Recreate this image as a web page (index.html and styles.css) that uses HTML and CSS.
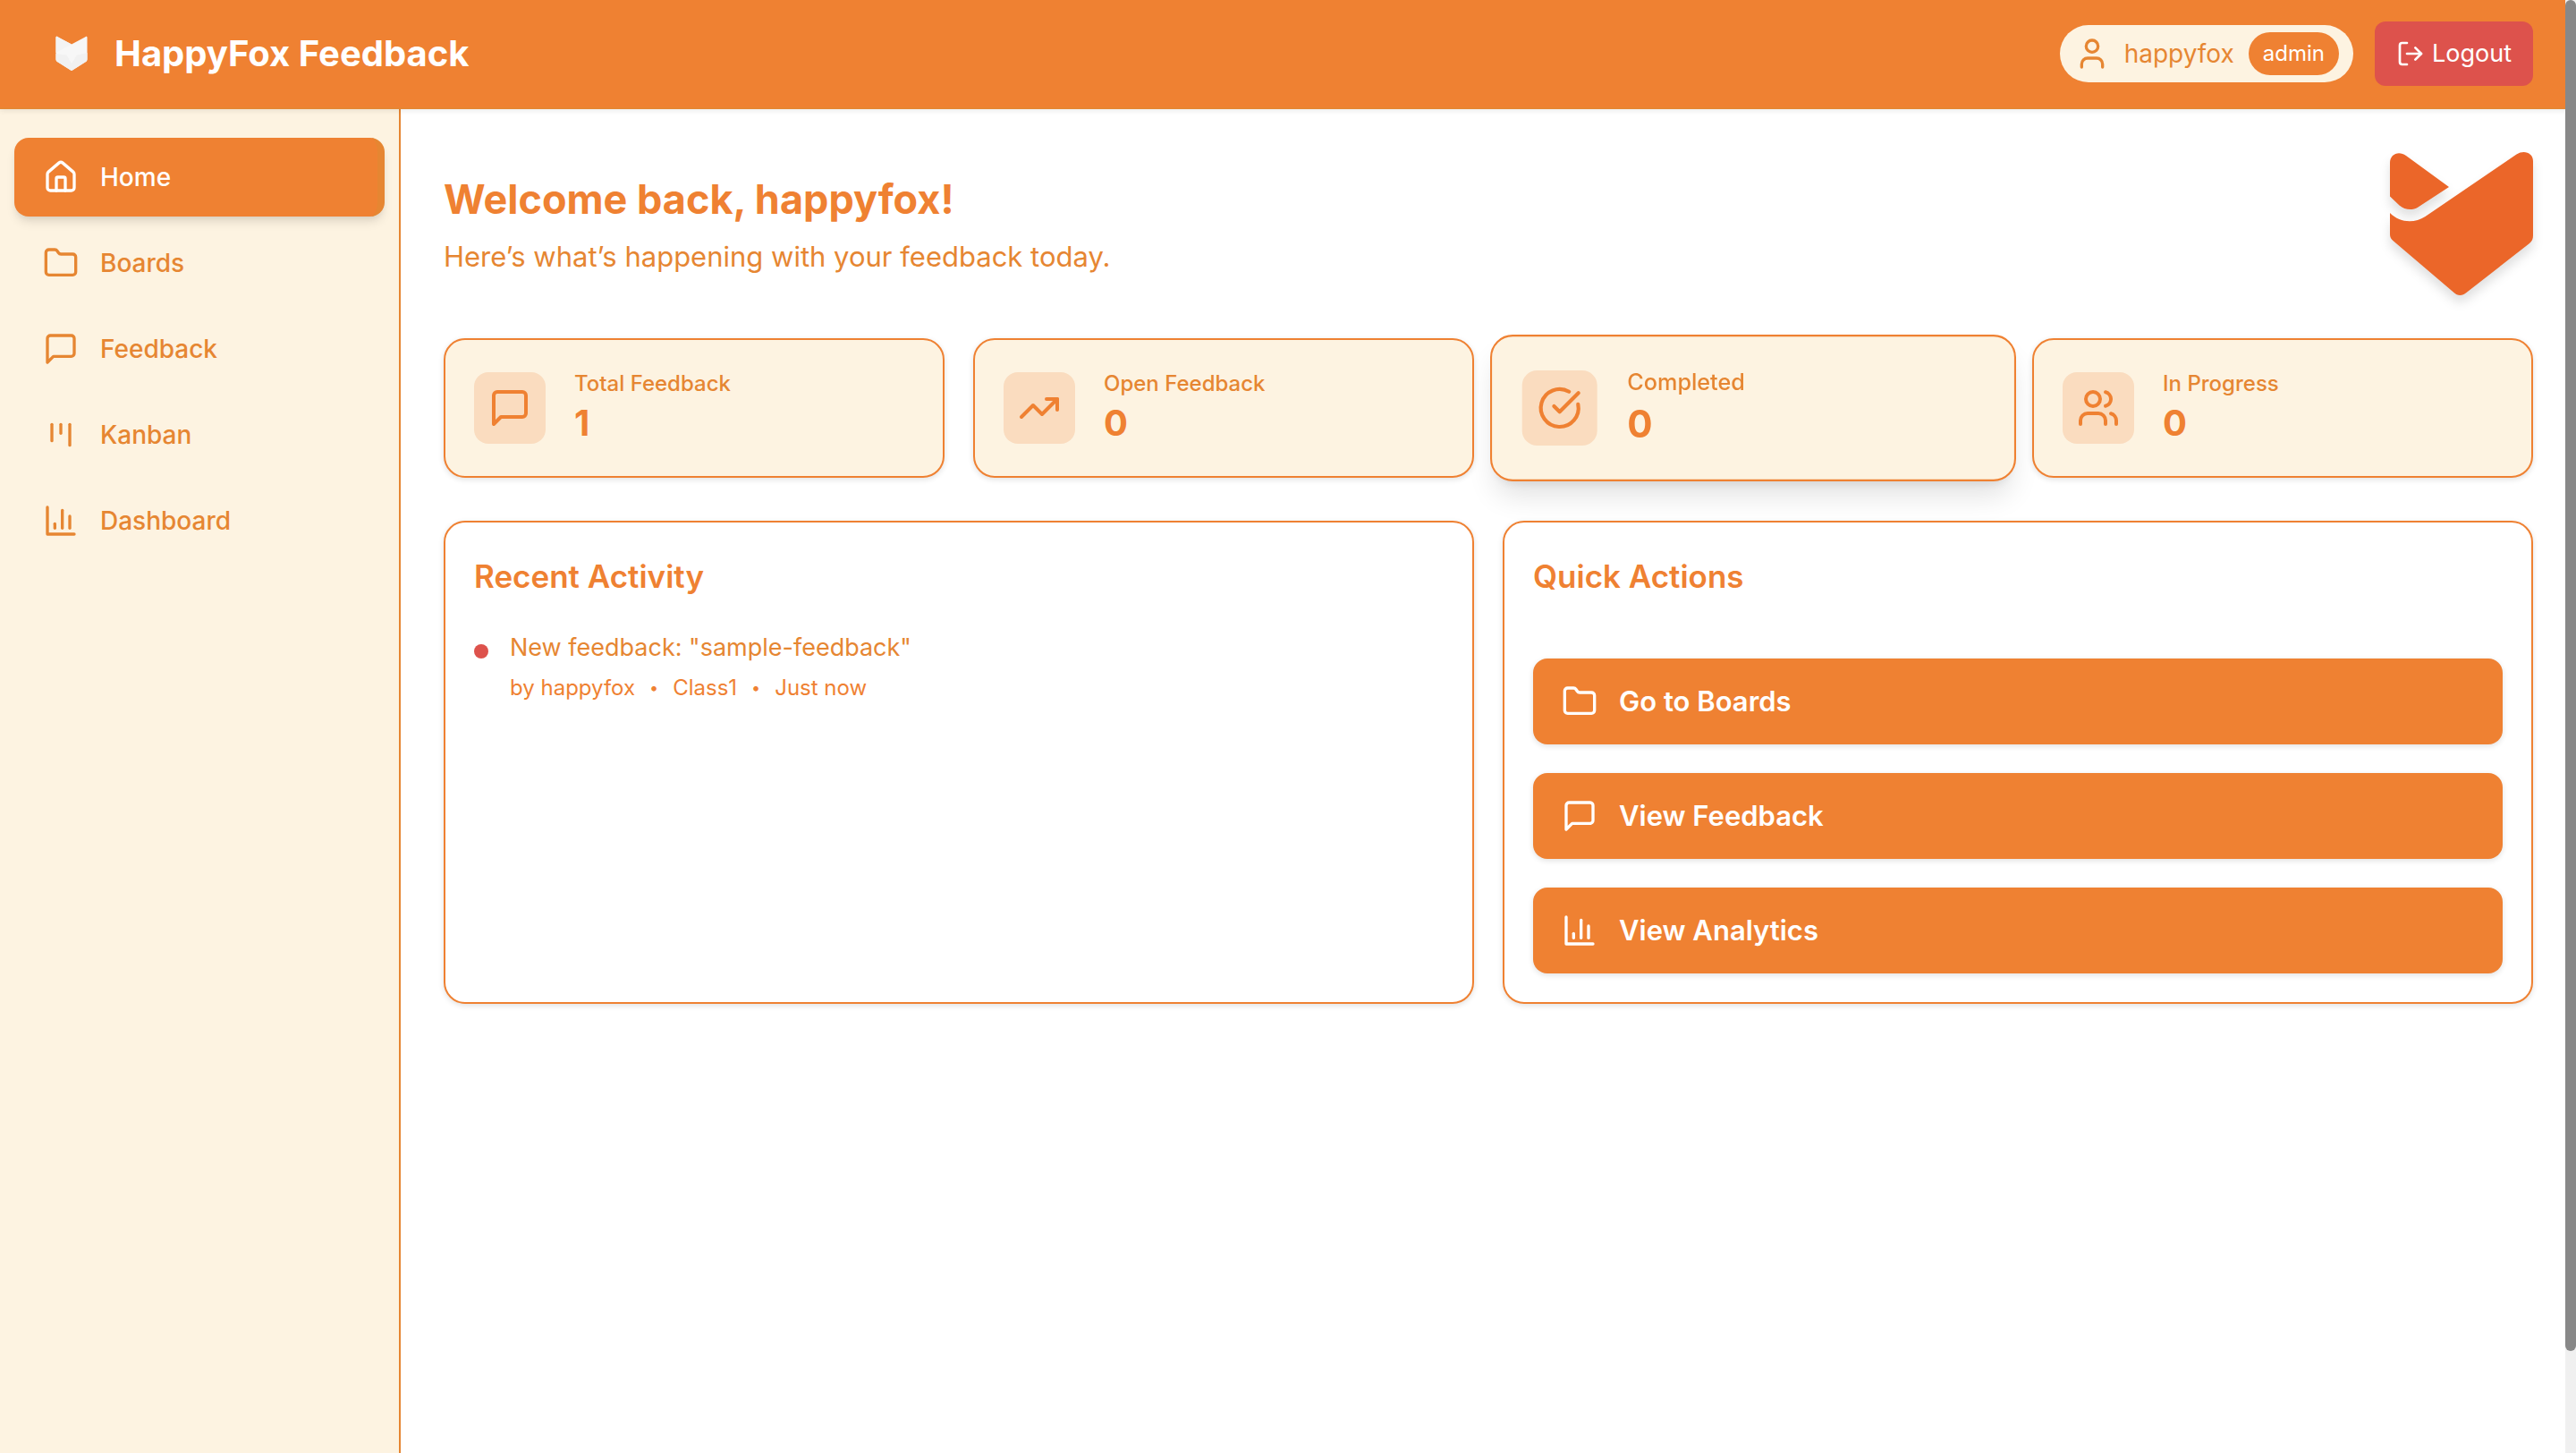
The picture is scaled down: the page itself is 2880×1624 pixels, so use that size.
FILE: index.html
```html
<!DOCTYPE html>
<html lang="en">
<head>
  <meta charset="utf-8">
  <meta name="viewport" content="width=device-width, initial-scale=1">
  <title>HappyFox Feedback</title>
  <link rel="stylesheet" href="styles.css">
</head>
<body>
  <svg class="sprite" aria-hidden="true">
    <symbol id="i-home" viewBox="0 0 24 24"><path d="M15 21v-8a1 1 0 0 0-1-1h-4a1 1 0 0 0-1 1v8"/><path d="M3 10a2 2 0 0 1 .709-1.528l7-5.999a2 2 0 0 1 2.582 0l7 5.999A2 2 0 0 1 21 10v9a2 2 0 0 1-2 2H5a2 2 0 0 1-2-2z"/></symbol>
    <symbol id="i-folder" viewBox="0 0 24 24"><path d="M20 20a2 2 0 0 0 2-2V8a2 2 0 0 0-2-2h-7.9a2 2 0 0 1-1.69-.9L9.6 3.9A2 2 0 0 0 7.93 3H4a2 2 0 0 0-2 2v13a2 2 0 0 0 2 2Z"/></symbol>
    <symbol id="i-message" viewBox="0 0 24 24"><path d="M21 15a2 2 0 0 1-2 2H7l-4 4V5a2 2 0 0 1 2-2h14a2 2 0 0 1 2 2z"/></symbol>
    <symbol id="i-kanban" viewBox="0 0 24 24"><path d="M6 5v11"/><path d="M12 5v6"/><path d="M18 5v14"/></symbol>
    <symbol id="i-chart" viewBox="0 0 24 24"><path d="M3 3v18h18"/><path d="M18 17V9"/><path d="M13 17V5"/><path d="M8 17v-3"/></symbol>
    <symbol id="i-trend" viewBox="0 0 24 24"><path d="m22 7-8.5 8.5-5-5L2 17"/><path d="M16 7h6v6"/></symbol>
    <symbol id="i-check" viewBox="0 0 24 24"><path d="M21.801 10A10 10 0 1 1 17 3.335"/><path d="m9 11 3 3L22 4"/></symbol>
    <symbol id="i-users" viewBox="0 0 24 24"><path d="M16 21v-2a4 4 0 0 0-4-4H6a4 4 0 0 0-4 4v2"/><circle cx="9" cy="7" r="4"/><path d="M22 21v-2a4 4 0 0 0-3-3.87"/><path d="M16 3.13a4 4 0 0 1 0 7.75"/></symbol>
    <symbol id="i-user" viewBox="0 0 24 24"><path d="M19 21v-2a4 4 0 0 0-4-4H9a4 4 0 0 0-4 4v2"/><circle cx="12" cy="7" r="4"/></symbol>
    <symbol id="i-logout" viewBox="0 0 24 24"><path d="M9 21H5a2 2 0 0 1-2-2V5a2 2 0 0 1 2-2h4"/><path d="m16 17 5-5-5-5"/><path d="M21 12H9"/></symbol>
  </svg>

  <header class="topbar">
    <div class="brand">
      <svg class="brand-mark" viewBox="0 0 64 64" aria-hidden="true">
        <path fill="#f7f7f7" d="M14.500 14C14.500 12.800 15.700 12.600 16.500 13.200L32 21.500L47.500 13.200C48.500 12.600 49.500 12.800 49.500 14V38C49.500 39.500 49 40.300 48 41L33 50.500C32.300 51 31.700 51 31 50.500L16 41C15 40.300 14.500 39.500 14.500 38Z"/>
        <path fill="#f1f1f1" d="M14.500 32L26.500 33.500L32 43L38 33.500L49.500 31V38C49.500 39.500 49 40.300 48 41L33 50.500C32.300 51 31.700 51 31 50.500L16 41C15 40.300 14.500 39.500 14.500 38Z"/>
        <path fill="#f3f3f3" d="M14.500 14C14.500 12.800 15.700 12.600 16.500 13.200L32 21.500L14.500 31Z"/>
      </svg>
      <span class="brand-name">HappyFox Feedback</span>
    </div>
    <div class="account">
      <div class="user-pill">
        <svg class="icon"><use href="#i-user"/></svg>
        <span class="user-name">happyfox</span>
        <span class="role">admin</span>
      </div>
      <button class="logout" type="button">
        <svg class="icon icon-sm"><use href="#i-logout"/></svg>
        Logout
      </button>
    </div>
  </header>

  <div class="layout">
    <nav class="sidebar" aria-label="Main">
      <a class="nav-item active" href="#home" aria-current="page"><svg class="icon"><use href="#i-home"/></svg>Home</a>
      <a class="nav-item" href="#boards"><svg class="icon"><use href="#i-folder"/></svg>Boards</a>
      <a class="nav-item" href="#feedback"><svg class="icon"><use href="#i-message"/></svg>Feedback</a>
      <a class="nav-item" href="#kanban"><svg class="icon"><use href="#i-kanban"/></svg>Kanban</a>
      <a class="nav-item" href="#dashboard"><svg class="icon"><use href="#i-chart"/></svg>Dashboard</a>
    </nav>

    <main class="content">
      <section class="welcome">
        <div class="welcome-text">
          <h1>Welcome back, happyfox!</h1>
          <p>Here’s what’s happening with your feedback today.</p>
        </div>
        <svg class="fox" viewBox="0 0 160 160" role="img" aria-label="HappyFox">
          <path d="M0 12C0 2 10 -2 18 4L66 39L31.500 61.500C25 65.500 17 65 10.500 59.500L0 49.500Z"/>
          <path d="M0 68C11 79 27 80 39.500 72L141.500 2.500C150 -3 160 1 160 10V93C160 97 159 99 156 102L85.500 157C81 161 75.500 161 71.500 157L4 99.500C1 97 0 95 0 92Z"/>
        </svg>
      </section>

      <section class="stats" aria-label="Statistics">
        <article class="stat">
          <span class="stat-icon"><svg class="icon icon-lg"><use href="#i-message"/></svg></span>
          <div><p class="stat-label">Total Feedback</p><p class="stat-value">1</p></div>
        </article>
        <article class="stat">
          <span class="stat-icon"><svg class="icon icon-lg"><use href="#i-trend"/></svg></span>
          <div><p class="stat-label">Open Feedback</p><p class="stat-value">0</p></div>
        </article>
        <article class="stat raised">
          <span class="stat-icon"><svg class="icon icon-lg"><use href="#i-check"/></svg></span>
          <div><p class="stat-label">Completed</p><p class="stat-value">0</p></div>
        </article>
        <article class="stat">
          <span class="stat-icon"><svg class="icon icon-lg"><use href="#i-users"/></svg></span>
          <div><p class="stat-label">In Progress</p><p class="stat-value">0</p></div>
        </article>
      </section>

      <div class="panels">
        <section class="panel">
          <h2>Recent Activity</h2>
          <ul class="activity">
            <li>
              <span class="dot"></span>
              <div>
                <p class="activity-title">New feedback: "sample-feedback"</p>
                <p class="activity-meta"><span>by happyfox</span><span class="sep">•</span><span>Class1</span><span class="sep">•</span><span>Just now</span></p>
              </div>
            </li>
          </ul>
        </section>
        <section class="panel">
          <h2>Quick Actions</h2>
          <div class="actions">
            <button class="action" type="button"><svg class="icon"><use href="#i-folder"/></svg>Go to Boards</button>
            <button class="action" type="button"><svg class="icon"><use href="#i-message"/></svg>View Feedback</button>
            <button class="action" type="button"><svg class="icon"><use href="#i-chart"/></svg>View Analytics</button>
          </div>
        </section>
      </div>
    </main>
  </div>

  <div class="scrollbar" aria-hidden="true"><div class="thumb"></div></div>
</body>
</html>
```
FILE: styles.css
```css
:root {
  --orange: #ef8132;
  --amber: #e68632;
  --cream: #fdf3e1;
  --red: #dd524c;
}

* {
  box-sizing: border-box;
}

body {
  margin: 0;
  min-height: 100vh;
  display: flex;
  flex-direction: column;
  background: #fff;
  color: var(--orange);
  font-family: Inter, "Liberation Sans", sans-serif;
}

h1, h2, p, ul {
  margin: 0;
  padding: 0;
}

button {
  border: 0;
  font: inherit;
  color: #fff;
  cursor: pointer;
}

.sprite {
  display: none;
}

.icon {
  flex: none;
  width: 40px;
  height: 40px;
  fill: none;
  stroke: currentColor;
  stroke-width: 2;
  stroke-linecap: round;
  stroke-linejoin: round;
}

.icon-sm {
  width: 32px;
  height: 32px;
}

.icon-lg {
  width: 48px;
  height: 48px;
}

/* Top bar */
.topbar {
  position: relative;
  z-index: 1;
  display: flex;
  align-items: center;
  justify-content: space-between;
  padding: 24px 48px;
  background: var(--orange);
  border-bottom: 2px solid var(--amber);
  box-shadow: 0 2px 6px rgba(0, 0, 0, 0.08);
}

.brand,
.account {
  display: flex;
  align-items: center;
}

.brand {
  gap: 16px;
}

.brand-mark {
  width: 64px;
  height: 64px;
}

.brand-name {
  color: #fff;
  font-size: 40px;
  font-weight: 700;
  line-height: 56px;
}

.account {
  gap: 24px;
}

.user-pill {
  display: flex;
  align-items: center;
  gap: 16px;
  padding: 8px 16px;
  border-radius: 32px;
  background: var(--cream);
  color: var(--amber);
}

.user-name {
  font-size: 28px;
  line-height: 40px;
}

.role {
  padding: 8px 16px;
  border-radius: 24px;
  background: var(--orange);
  color: #fff;
  font-size: 24px;
  line-height: 32px;
}

.logout {
  display: flex;
  align-items: center;
  gap: 8px;
  padding: 16px 24px;
  border-radius: 12px;
  background: var(--red);
  font-size: 27px;
  line-height: 40px;
}

/* Page body */
.layout {
  flex: 1;
  display: flex;
}

.sidebar {
  flex: none;
  width: 448px;
  display: flex;
  flex-direction: column;
  gap: 8px;
  padding: 32px 16px;
  background: var(--cream);
  border-right: 2px solid var(--amber);
}

.nav-item {
  display: flex;
  align-items: center;
  gap: 24px;
  padding: 24px 32px;
  border-radius: 16px;
  color: var(--amber);
  font-size: 28px;
  font-weight: 450;
  line-height: 40px;
  text-decoration: none;
}

.nav-item.active {
  background: var(--orange);
  border-right: 8px solid var(--amber);
  color: #fff;
  box-shadow: 0 8px 12px -2px rgba(0, 0, 0, 0.1), 0 4px 8px -4px rgba(0, 0, 0, 0.1);
}

.content {
  flex: 1;
  min-width: 0;
  display: flex;
  flex-direction: column;
  gap: 48px;
  padding: 48px;
}

.welcome {
  display: flex;
  align-items: center;
  justify-content: space-between;
}

.welcome-text {
  display: flex;
  flex-direction: column;
  gap: 10px;
}

h1 {
  font-size: 45px;
  font-weight: 700;
  line-height: 64px;
}

.welcome-text p {
  color: var(--amber);
  font-size: 31px;
  line-height: 44px;
}

.fox {
  width: 160px;
  height: 160px;
  fill: #eb6629;
  overflow: visible;
  filter: drop-shadow(0 8px 6px rgba(0, 0, 0, 0.12));
}

/* Stat cards */
.stats {
  display: grid;
  grid-template-columns: repeat(4, 1fr);
  gap: 32px;
}

.stat {
  display: flex;
  align-items: center;
  gap: 32px;
  padding: 32px;
  border: 2px solid var(--orange);
  border-radius: 24px;
  background: var(--cream);
  box-shadow: 0 2px 6px rgba(0, 0, 0, 0.12);
}

.stat.raised {
  transform: scale(1.05);
  box-shadow: 0 20px 30px -6px rgba(0, 0, 0, 0.12), 0 8px 12px -8px rgba(0, 0, 0, 0.12);
}

.stat-icon {
  display: grid;
  place-items: center;
  width: 80px;
  height: 80px;
  border-radius: 16px;
  background: #fadcbf;
}

.stat-label {
  color: var(--amber);
  font-size: 24px;
  font-weight: 450;
  line-height: 34px;
}

.stat-value {
  font-size: 40px;
  font-weight: 650;
  line-height: 54px;
}

/* Panels */
.panels {
  display: grid;
  grid-template-columns: 1fr 1fr;
  gap: 32px;
}

.panel {
  padding: 32px;
  border: 2px solid var(--orange);
  border-radius: 24px;
  background: #fff;
  box-shadow: 0 2px 6px rgba(0, 0, 0, 0.12);
}

h2 {
  font-size: 35px;
  font-weight: 600;
  line-height: 56px;
}

.activity {
  margin-top: 32px;
  list-style: none;
}

.activity li {
  display: flex;
  gap: 24px;
}

.dot {
  flex: none;
  width: 16px;
  height: 16px;
  margin-top: 16px;
  border-radius: 50%;
  background: var(--red);
}

.activity-title {
  color: var(--amber);
  font-size: 27px;
  line-height: 40px;
}

.activity-meta {
  display: flex;
  gap: 16px;
  margin-top: 8px;
  font-size: 24px;
  line-height: 34px;
}

.sep {
  font-size: 18px;
}

.actions {
  display: flex;
  flex-direction: column;
  gap: 32px;
  margin-top: 64px;
}

.action {
  display: flex;
  align-items: center;
  gap: 24px;
  padding: 24px 32px;
  border-radius: 16px;
  background: var(--orange);
  font-size: 31px;
  font-weight: 600;
  line-height: 48px;
  box-shadow: 0 2px 6px rgba(0, 0, 0, 0.12);
}

/* Overlay scrollbar */
.scrollbar {
  position: absolute;
  z-index: 2;
  top: 0;
  right: 0;
  bottom: 0;
  width: 12px;
  background: #f0f0f0;
}

.thumb {
  height: 93%;
  border-radius: 6px;
  background: #888;
}
```
